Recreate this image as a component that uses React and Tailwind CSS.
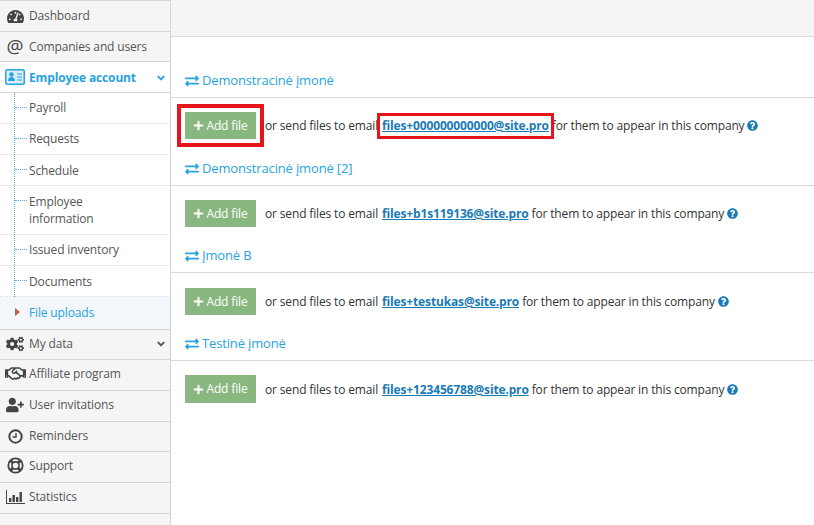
import React from "react";
import { FaTachometerAlt, FaCogs, FaRegHandshake, FaUserPlus, FaExchangeAlt, FaPlus, FaQuestionCircle, FaAngleDown } from "react-icons/fa";

function Top({ icon, label, h, chevron, className = "" }) {
  return (
    <div className={`flex items-center border-b border-[#d5d5d5] bg-[#f5f5f5] text-[#555] ${h} ${className}`}>
      <span className="flex w-[29px] shrink-0 justify-center pl-[1px] text-[#444]">{icon}</span>
      <span>{label}</span>
      {chevron && <FaAngleDown className="ml-auto mr-[3px] text-[12px]" />}
    </div>
  );
}

function Sub({ label, h, active, last, flat }) {
  return (
    <div className={`relative flex items-center pl-[29px] ${flat ? "" : "pb-[1px]"} ${h} ${last ? "" : "border-b border-dotted border-[#dcdcdc]"} ${active ? "bg-[#f3f6fa] text-[#29a3dc]" : "text-[#555]"}`}>
      {active ? (
        <span className="absolute left-[15px] top-[11px] h-0 w-0 border-y-[4px] border-l-[5px] border-y-transparent border-l-[#c0603c]" />
      ) : (
        <span className="absolute left-[15px] top-[14px] w-[12px] border-t border-dotted border-[#5aaee8]" />
      )}
      <span className="leading-[17px]">{label}</span>
    </div>
  );
}

function Section({ title, email, highlight, top, rowTop = "mt-[14px]", rowH = "h-[27px]", btnH = "h-[27px]" }) {
  return (
    <section className={top}>
      <h3 className="flex h-[20px] items-center pl-[14px] text-[13px] font-normal text-[#29a3dc]">
        <FaExchangeAlt className="mr-[3px] text-[14px]" />
        {title}
      </h3>
      <hr className="mt-[6px] border-t border-[#d9d9d9]" />
      <div className={`flex items-center pl-[14px] text-[#333] ${rowTop} ${rowH}`}>
        <div className={`relative self-start ${btnH}`}>
          {highlight && <span className="absolute -inset-x-[8px] -inset-y-[8px] border-[4px] border-[#e8141c]" />}
          <button className="flex h-full w-[71px] items-center justify-center bg-[#88b77f] text-[12px] text-white">
            <FaPlus className="mr-[2px] text-[11px]" />
            Add file
          </button>
        </div>
        <span className="ml-[9px]">or send files to email</span>
        <span className="relative ml-[4px]">
          {highlight && <span className="absolute -inset-x-[5px] -top-[4px] -bottom-[4px] border-[3px] border-[#e8141c]" />}
          <a className="font-bold text-[#1a7ab5] underline">{email}</a>
        </span>
        <span className="ml-[3px]">for them to appear in this company</span>
        <FaQuestionCircle className="ml-[3px] text-[11px] text-[#1a7ab5]" />
      </div>
    </section>
  );
}

const CardIcon = () => (
  <svg width="20" height="16" viewBox="0 0 20 16">
    <rect x="0.75" y="0.75" width="18.5" height="14.5" rx="1.5" fill="#d8ecf9" stroke="#29a3dc" strokeWidth="1.5" />
    <circle cx="6.5" cy="5.5" r="2.2" fill="#29a3dc" />
    <path d="M3 12c0-3 1.5-4 3.5-4s3.5 1 3.5 4z" fill="#29a3dc" />
    <path d="M12 5h5M12 8h5M12 11h5" stroke="#29a3dc" strokeWidth="1.2" />
  </svg>
);

const ClockIcon = () => (
  <svg width="15" height="15" viewBox="0 0 15 15" fill="none" stroke="#444">
    <circle cx="7.5" cy="7.5" r="6.2" strokeWidth="2" />
    <path d="M8 4v4H4.5" strokeWidth="1.4" />
  </svg>
);

const RingIcon = () => (
  <svg width="17" height="17" viewBox="0 0 17 17" fill="none" stroke="#444">
    <circle cx="8.5" cy="8.5" r="7.2" strokeWidth="1.8" />
    <circle cx="8.5" cy="8.5" r="3.6" strokeWidth="1.6" />
    <path d="M3.5 3.5l2.5 2.5M13.5 3.5L11 6M3.5 13.5L6 11M13.5 13.5L11 11" strokeWidth="3" />
  </svg>
);

const ChartIcon = () => (
  <svg width="19" height="16" viewBox="0 0 19 16" fill="#444">
    <rect x="0" y="1" width="1" height="14" />
    <rect x="0" y="14" width="19" height="1" />
    <rect x="3" y="9" width="2.4" height="4" />
    <rect x="6.5" y="6" width="2.4" height="7" />
    <rect x="10" y="8" width="2.4" height="5" />
    <rect x="13.5" y="3" width="2.4" height="10" />
  </svg>
);

export default function App() {
  return (
    <div className="flex h-[525px] w-[814px] overflow-hidden bg-white text-[12px] tracking-[-0.15px] font-['Open_Sans',sans-serif]">
      <aside className="h-full w-[171px] shrink-0 border-r border-[#d5d5d5] bg-[#f5f5f5]">
        <Top icon={<FaTachometerAlt className="text-[17px]" />} label="Dashboard" h="h-[32px] border-t" />
        <Top icon={<span className="text-[19px] leading-none tracking-normal">@</span>} label="Companies and users" h="h-[30px]" />
        <div className="flex h-[31px] items-center border-b border-[#d5d5d5] bg-white pt-[1px] font-bold text-[#29a3dc]">
          <span className="flex w-[29px] shrink-0 justify-center pb-[1px]"><CardIcon /></span>
          <span>Employee account</span>
          <FaAngleDown className="ml-auto mr-[3px] text-[12px]" />
        </div>
        <div className="relative bg-white">
          <span className="absolute bottom-0 left-[14px] top-0 border-l border-dotted border-[#5aaee8]" />
          <Sub label="Payroll" h="h-[31px]" />
          <Sub label="Requests" h="h-[31px]" />
          <Sub label="Schedule" h="h-[31px]" flat />
          <Sub label={<>Employee<br />information</>} h="h-[49px]" />
          <Sub label="Issued inventory" h="h-[31px]" />
          <Sub label="Documents" h="h-[31px]" flat />
          <Sub label="File uploads" h="h-[32px]" active last />
        </div>
        <Top icon={<FaCogs className="text-[18px]" />} label="My data" h="h-[31px] border-t pb-[1px]" chevron />
        <Top icon={<FaRegHandshake className="text-[21px]" />} label="Affiliate program" h="h-[31px] pb-[3px]" />
        <Top icon={<FaUserPlus className="text-[18px]" />} label="User invitations" h="h-[31px] pb-[3px]" />
        <Top icon={<ClockIcon />} label="Reminders" h="h-[30px] pb-[1px]" />
        <Top icon={<RingIcon />} label="Support" h="h-[31px] pb-[3px]" />
        <Top icon={<ChartIcon />} label="Statistics" h="h-[31px] pb-[3px]" />
      </aside>
      <main className="min-w-0 flex-1">
        <div className="h-[37px] border-b border-[#d9d9d9] bg-[#f5f5f5]" />
        <Section top="mt-[34px]" title="Demonstracinė įmonė" email="files+000000000000@site.pro" highlight />
        <Section top="mt-[20px]" title="Demonstracinė įmonė [2]" email="files+b1s119136@site.pro" />
        <Section top="mt-[19px]" title="Įmonė B" email="files+testukas@site.pro" rowTop="mt-[15px]" />
        <Section top="mt-[19px]" title="Testinė įmonė" email="files+123456788@site.pro" rowH="h-[29px]" btnH="h-[28px]" />
      </main>
    </div>
  );
}
